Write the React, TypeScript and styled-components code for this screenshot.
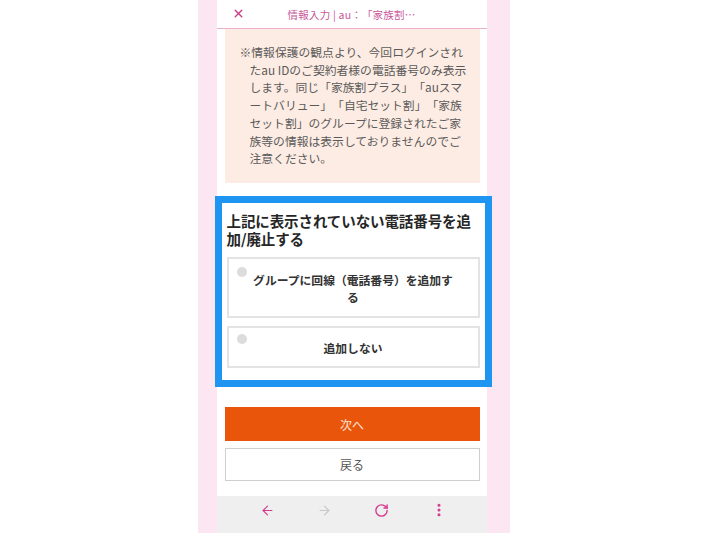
import React from 'react';
import styled, { createGlobalStyle } from 'styled-components';
import { ArrowLeft, ArrowRight, RotateCw, EllipsisVertical, X } from 'lucide-react';

const GlobalStyle = createGlobalStyle`
  html, body {
    margin: 0;
    padding: 0;
    background: #fff;
  }
  body {
    font-family: "Noto Sans CJK JP", "Noto Sans", sans-serif;
    text-spacing-trim: space-all;
  }
`;

const Page = styled.div`
  width: 710px;
  height: 533px;
  display: flex;
  justify-content: center;
  overflow: hidden;
`;

const Frame = styled.div`
  width: 312px;
  height: 533px;
  margin-left: -3px;
  padding: 0 23px 0 19px;
  box-sizing: border-box;
  background: #fbe6f2;
`;

const Screen = styled.div`
  height: 100%;
  background: #fff;
  display: flex;
  flex-direction: column;
`;

const Header = styled.header`
  height: 28px;
  flex-shrink: 0;
  display: flex;
  align-items: center;
  position: relative;
  border-bottom: 1.5px solid #eab0cc;
`;

const CloseButton = styled.span`
  position: absolute;
  left: 15px;
  top: 7px;
  color: #cc3b86;
  display: flex;
`;

const HeaderTitle = styled.div`
  flex: 1;
  text-align: center;
  color: #c8589a;
  font-size: 10.5px;
  letter-spacing: 0.2px;
`;

const Main = styled.main`
  flex: 1;
  display: flex;
  flex-direction: column;
  min-height: 0;
`;

const Notice = styled.div`
  margin: 0 7px 0 8px;
  height: 154px;
  box-sizing: border-box;
  background: #fdece3;
  padding: 14px 10px 0 15px;
  color: #5a5a5a;
  font-size: 11.8px;
  line-height: 17.7px;
`;

const NoticeLine = styled.span<{ $indent?: boolean }>`
  display: block;
  white-space: nowrap;
  padding-left: ${p => (p.$indent ? '10px' : '0')};
`;

const Highlight = styled.section`
  margin: 13px -5px 0 -2px;
  border: 7px solid #1f95f2;
  padding: 9px 5px 12px 5px;
  background: #fff;
`;

const SectionTitle = styled.h2`
  margin: 0 0 9px;
  font-size: 14.5px;
  line-height: 18px;
  font-weight: 700;
  color: #262626;
  letter-spacing: -0.1px;
`;

const OptionList = styled.div`
  display: flex;
  flex-direction: column;
  gap: 8px;
`;

const Option = styled.label<{ $height: number }>`
  position: relative;
  height: ${p => p.$height}px;
  box-sizing: border-box;
  border: 2px solid #e3e3e3;
  display: flex;
  align-items: center;
  justify-content: center;
  text-align: center;
  padding: 0 20px;
  font-size: 11.8px;
  line-height: 17px;
  font-weight: 700;
  color: #333;
`;

const Radio = styled.span<{ $top: number }>`
  position: absolute;
  left: 8px;
  top: ${p => p.$top}px;
  width: 10px;
  height: 10px;
  border-radius: 50%;
  background: #dcdcdc;
`;

const Actions = styled.div`
  margin: 20px 7px 0 8px;
  display: flex;
  flex-direction: column;
  gap: 7px;
`;

const Button = styled.button<{ $primary?: boolean }>`
  height: ${p => (p.$primary ? 34 : 33)}px;
  border: ${p => (p.$primary ? 'none' : '1.5px solid #cfcfcf')};
  background: ${p => (p.$primary ? '#e9560b' : '#fff')};
  color: ${p => (p.$primary ? '#fbe3d6' : '#555')};
  font-family: inherit;
  font-size: 12px;
  padding: 0;
  cursor: pointer;
`;

const NavBar = styled.nav`
  height: 37px;
  flex-shrink: 0;
  background: #efefef;
  display: grid;
  grid-template-columns: repeat(4, 20px);
  column-gap: 37px;
  align-items: center;
  padding-left: 41px;
  padding-bottom: 9px;
  box-sizing: border-box;
`;

const NavIcon = styled.span<{ $disabled?: boolean }>`
  display: flex;
  justify-content: center;
  color: ${p => (p.$disabled ? '#c8c8c8' : '#d63a8d')};
`;

export default function App() {
  return (
    <>
      <GlobalStyle />
      <Page>
        <Frame>
          <Screen>
            <Header>
              <CloseButton>
                <X size={13} strokeWidth={2.6} />
              </CloseButton>
              <HeaderTitle>情報入力 | au：「家族割…</HeaderTitle>
            </Header>
            <Main>
              <Notice>
                <NoticeLine>※情報保護の観点より、今回ログインされ</NoticeLine>
                <NoticeLine $indent>たau IDのご契約者様の電話番号のみ表示</NoticeLine>
                <NoticeLine $indent>します。同じ「家族割プラス」「auスマ</NoticeLine>
                <NoticeLine $indent>ートバリュー」「自宅セット割」「家族</NoticeLine>
                <NoticeLine $indent>セット割」のグループに登録されたご家</NoticeLine>
                <NoticeLine $indent>族等の情報は表示しておりませんのでご</NoticeLine>
                <NoticeLine $indent>注意ください。</NoticeLine>
              </Notice>
              <Highlight>
                <SectionTitle>
                  上記に表示されていない電話番号を追
                  <br />
                  加/廃止する
                </SectionTitle>
                <OptionList>
                  <Option $height={61}>
                    <Radio $top={8} />
                    <span>
                      グループに回線（電話番号）を追加す
                      <br />る
                    </span>
                  </Option>
                  <Option $height={42}>
                    <Radio $top={6} />
                    <span>追加しない</span>
                  </Option>
                </OptionList>
              </Highlight>
              <Actions>
                <Button $primary>次へ</Button>
                <Button>戻る</Button>
              </Actions>
            </Main>
            <NavBar>
              <NavIcon>
                <ArrowLeft size={15} strokeWidth={1.8} />
              </NavIcon>
              <NavIcon $disabled>
                <ArrowRight size={15} strokeWidth={1.8} />
              </NavIcon>
              <NavIcon>
                <RotateCw size={15} strokeWidth={2.2} />
              </NavIcon>
              <NavIcon>
                <EllipsisVertical size={16} strokeWidth={2.6} />
              </NavIcon>
            </NavBar>
          </Screen>
        </Frame>
      </Page>
    </>
  );
}
